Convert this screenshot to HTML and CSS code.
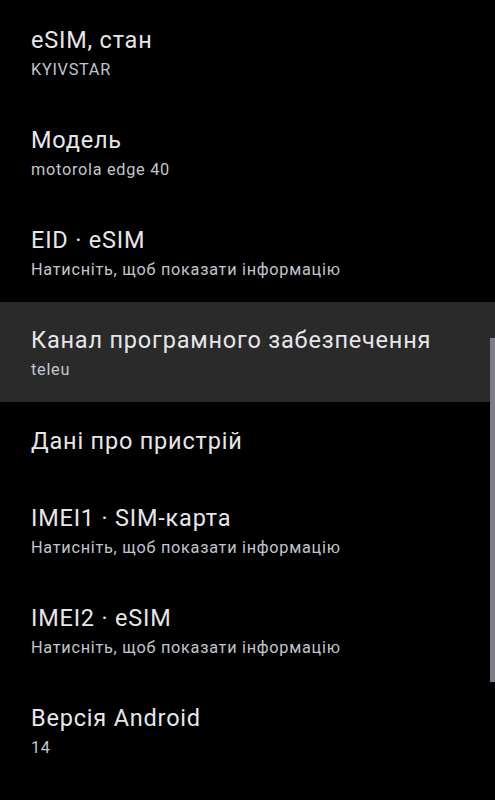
FILE: index.html
```html
<!DOCTYPE html>
<html lang="uk">
<head>
  <meta charset="UTF-8">
  <title>Про телефон</title>
  <link rel="stylesheet" href="styles.css">
</head>
<body>
  <main class="settings-list">
    <div class="pref">
      <div class="pref-title">eSIM, стан</div>
      <div class="pref-summary">KYIVSTAR</div>
    </div>
    <div class="pref">
      <div class="pref-title">Модель</div>
      <div class="pref-summary">motorola edge 40</div>
    </div>
    <div class="pref">
      <div class="pref-title">EID · eSIM</div>
      <div class="pref-summary">Натисніть, щоб показати інформацію</div>
    </div>
    <div class="pref pressed">
      <div class="pref-title">Канал програмного забезпечення</div>
      <div class="pref-summary">teleu</div>
    </div>
    <div class="pref single">
      <div class="pref-title">Дані про пристрій</div>
    </div>
    <div class="pref">
      <div class="pref-title">IMEI1 · SIM-карта</div>
      <div class="pref-summary">Натисніть, щоб показати інформацію</div>
    </div>
    <div class="pref">
      <div class="pref-title">IMEI2 · eSIM</div>
      <div class="pref-summary">Натисніть, щоб показати інформацію</div>
    </div>
    <div class="pref">
      <div class="pref-title">Версія Android</div>
      <div class="pref-summary">14</div>
    </div>
  </main>

  <div class="scrollbar"></div>
</body>
</html>
```

FILE: styles.css
```css
html, body {
  margin: 0;
  padding: 0;
  background-color: #000;
  font-family: Roboto, 'Noto Sans', sans-serif;
}

body {
  height: 800px;
  overflow: hidden;
}

.settings-list {
  display: flex;
  flex-direction: column;
  padding-top: 2px;
}

.pref {
  display: flex;
  flex-direction: column;
  padding: 23px 20px 19px 31px;
}

.pref.single {
  padding: 24px 20px 23px 31px;
}

.pref.pressed {
  background-color: #2a2a2a;
}

.pref-title {
  color: #e6e6ea;
  font-size: 23.5px;
  line-height: 31px;
  letter-spacing: 0.8px;
}

.pref-summary {
  color: #c2c5ce;
  font-size: 16.3px;
  line-height: 27px;
  letter-spacing: 0.72px;
}

.scrollbar {
  position: fixed;
  top: 338px;
  right: 0;
  width: 5px;
  height: 344px;
  background-color: #7b7e88;
}
```
